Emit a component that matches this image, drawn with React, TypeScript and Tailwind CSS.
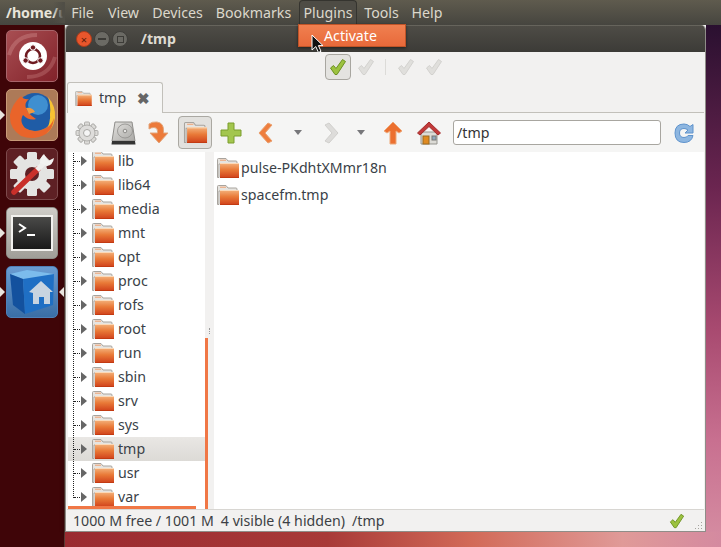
import type { ReactNode } from "react";

const TREE = ["lib", "lib64", "media", "mnt", "opt", "proc", "rofs", "root", "run", "sbin", "srv", "sys", "tmp", "usr", "var"];
const MENUS: [string, string][] = [
  ["File", "w-[35px]"],
  ["View", "w-[47px]"],
  ["Devices", "w-[61px]"],
  ["Bookmarks", "w-[91px]"],
  ["Plugins", "w-[58px]"],
  ["Tools", "w-[49px]"],
  ["Help", "w-[42px]"],
];

function Folder({ w = 22, h = 20 }: { w?: number; h?: number }) {
  return (
    <svg width={w} height={h} viewBox="0 0 22 20" className="shrink-0">
      <defs>
        <linearGradient id="fo" x1="0" y1="0" x2="0" y2="1">
          <stop offset="0" stopColor="#f4b27c" />
          <stop offset="0.45" stopColor="#e97a38" />
          <stop offset="1" stopColor="#d0401a" />
        </linearGradient>
      </defs>
      <path d="M0.5 19.5V1.5Q0.5 0.5 1.5 0.5H9L11 3H19Q20 3 20 4V6H2V19.5Z" fill="#e6e4e0" stroke="#a8a49e" />
      <path d="M3 2.2H9" stroke="#f0a070" />
      <rect x="3" y="5" width="19" height="15" rx="0.5" fill="url(#fo)" />
      <rect x="3" y="5" width="19" height="1" fill="#fbd9b8" />
      <rect x="3" y="19" width="19" height="1" fill="#c23a12" />
    </svg>
  );
}

function Check({ faded = false, size = 18 }: { faded?: boolean; size?: number }) {
  return (
    <svg width={size} height={size} viewBox="0 0 18 18">
      <path
        d="M1.5 10L4.5 7.5L7 10.5L13.5 1.5L16.5 3.5L8 16.5H6Z"
        fill={faded ? "#e0dfdc" : "#9cc23f"}
        stroke={faded ? "#d2d1ce" : "#6c9022"}
        strokeLinejoin="round"
      />
    </svg>
  );
}

function Gear() {
  const teeth = [0, 45, 90, 135, 180, 225, 270, 315];
  return (
    <svg width="24" height="24" viewBox="0 0 24 24">
      {teeth.map((a) => (
        <rect key={a} x="9.5" y="1" width="5" height="5" rx="1" fill="#dcdbd8" stroke="#b0afac" transform={`rotate(${a} 12 12)`} />
      ))}
      <circle cx="12" cy="12" r="8" fill="#dedddb" stroke="#b0afac" />
      <circle cx="12" cy="12" r="3.5" fill="#f5f5f5" stroke="#a9a8a5" />
    </svg>
  );
}

function Drive() {
  return (
    <svg width="25" height="24" viewBox="0 0 25 24">
      <defs>
        <linearGradient id="dr" x1="0" y1="0" x2="1" y2="1">
          <stop offset="0" stopColor="#e4e3e0" />
          <stop offset="1" stopColor="#a9a8a5" />
        </linearGradient>
      </defs>
      <path d="M4 1H21L24 20H1Z" fill="url(#dr)" stroke="#8e8d8a" />
      <ellipse cx="14" cy="10" rx="7.5" ry="7" fill="none" stroke="#8f8e8b" strokeWidth="0.8" />
      <circle cx="14" cy="10" r="1.8" fill="#e6e5e3" stroke="#8e8d8a" />
      <path d="M1 20H24L24.5 23.5H0.5Z" fill="#333" />
    </svg>
  );
}

function Redo() {
  return (
    <svg width="21" height="23" viewBox="0 0 21 23">
      <path
        d="M1 3Q4 0.5 9 1Q16 2 15.5 10V12H20L11 22L2 12H9.5V10Q9.5 6.5 6 6.5Q3 6.5 1 8Z"
        fill="#ec7a3a"
        stroke="#e2a67c"
        strokeLinejoin="round"
      />
    </svg>
  );
}

function Plus() {
  return (
    <svg width="22" height="22" viewBox="0 0 22 22">
      <path d="M8 1H14V8H21V14H14V21H8V14H1V8H8Z" fill="#a3c64e" stroke="#7b9d2c" strokeLinejoin="round" />
    </svg>
  );
}

function Chevron({ dir, faded }: { dir: "left" | "right"; faded?: boolean }) {
  const d = dir === "left" ? "M10 1L14 3L7 11L14 19L10 21L1 11Z" : "M5 1L1 3L8 11L1 19L5 21L14 11Z";
  return (
    <svg width="15" height="22" viewBox="0 0 15 22">
      <path d={d} fill={faded ? "#dddcda" : "#ee7e3e"} stroke={faded ? "#d0cfcc" : "#e8a070"} strokeLinejoin="round" />
    </svg>
  );
}

function Drop() {
  return <div className="w-0 h-0 border-x-[4px] border-x-transparent border-t-[5px] border-t-[#77777a]" />;
}

function Up() {
  return (
    <svg width="20" height="24" viewBox="0 0 20 24">
      <path d="M10 1L19 10L16 12L13 10V23H7V10L4 12L1 10Z" fill="#ec7030" stroke="#eda878" strokeLinejoin="round" />
    </svg>
  );
}

function Home() {
  return (
    <svg width="24" height="24" viewBox="0 0 24 24">
      <path d="M4 11H20V23H4Z" fill="#dcdbd6" stroke="#96958f" />
      <path d="M0.5 12L12 1L23.5 12L21 14L12 5.5L3 14Z" fill="#c23a3a" stroke="#a22c2c" strokeLinejoin="round" />
      <rect x="6" y="15" width="6" height="8" fill="#e08a20" stroke="#9c6a1e" />
      <rect x="15" y="15" width="4" height="4" fill="#8fa7bd" stroke="#787874" />
    </svg>
  );
}

function Refresh() {
  return (
    <svg width="20" height="22" viewBox="0 0 20 22">
      <path
        d="M19 2.5V11H11L14 8Q12 6.5 10 6.5Q5.5 6.5 5.5 11Q5.5 15.5 10 15.5Q13 15.5 14 13.5H19Q17.5 20.5 10 20.5Q1 20.5 1 11Q1 2 10 2Q13.5 2 16 4.5Z"
        fill="#8db6e0"
        stroke="#5f93cc"
        strokeLinejoin="round"
      />
    </svg>
  );
}

function Tile({ className, children, pipL, pipR }: { className: string; children: ReactNode; pipL?: boolean; pipR?: boolean }) {
  return (
    <div className="relative w-[64px] h-[52px] flex justify-center">
      {pipL && <div className="absolute left-0 top-[21px] w-0 h-0 border-y-[5px] border-y-transparent border-l-[5px] border-l-[#e8e4de]" />}
      {pipR && <div className="absolute right-0 top-[21px] w-0 h-0 border-y-[5px] border-y-transparent border-r-[5px] border-r-[#e8e4de]" />}
      <div className={`w-[52px] h-[52px] rounded-[5px] flex items-center justify-center overflow-hidden ${className}`}>{children}</div>
    </div>
  );
}

function Launcher() {
  return (
    <div className="w-[65px] shrink-0 bg-[#3f0508] border-r border-r-[#5a3a34] flex flex-col gap-[7px] pt-[5px]">
      <Tile className="bg-[linear-gradient(135deg,#a84e52,#82222a)] border border-[#a8646a]">
        <svg width="50" height="50" viewBox="0 0 50 50">
          <path d="M2 24Q8 4 30 4" fill="none" stroke="#c07476" strokeWidth="4" opacity="0.6" />
          <path d="M48 26Q42 46 20 46" fill="none" stroke="#b86a6c" strokeWidth="4" opacity="0.5" />
          <circle cx="26" cy="25" r="14" fill="#fff" />
          <circle cx="26" cy="25" r="7" fill="none" stroke="#6e1a20" strokeWidth="2.6" />
          <circle cx="26" cy="16.5" r="2.7" fill="#6e1a20" stroke="#fff" />
          <circle cx="18.6" cy="29.5" r="2.7" fill="#6e1a20" stroke="#fff" />
          <circle cx="33.4" cy="29.5" r="2.7" fill="#6e1a20" stroke="#fff" />
        </svg>
      </Tile>
      <Tile pipL className="bg-[#ad7a58] border border-[#c89a78]">
        <svg width="50" height="50" viewBox="0 0 50 50">
          <circle cx="28" cy="22" r="19" fill="#1f5ca6" />
          <circle cx="31" cy="15" r="10" fill="#3f8fd0" />
          <path d="M41 7Q49 16 48 28Q46 40 38 44Q44 32 43 24Q44 15 41 7Z" fill="#f8c232" />
          <path d="M14 6Q5 14 3 25Q2 38 14 46Q27 51 39 44Q46 39 47 28Q44 37 37 39Q27 44 18 38Q12 31 16 25Q22 31 29 29Q21 24 19 18Q17 13 22 9Q17 10 14 6Z" fill="#e9642a" />
          <path d="M19 18Q25 17 28 22L22 24Z" fill="#f19a3e" />
        </svg>
      </Tile>
      <Tile className="bg-[#5e2024] border border-[#7c4a4c]">
        <svg width="50" height="50" viewBox="0 0 50 50">
          {[0, 45, 90, 135, 180, 225, 270, 315].map((a) => (
            <rect key={a} x="20" y="3" width="10" height="9" rx="1.5" fill="#e4e4e2" transform={`rotate(${a} 25 25)`} />
          ))}
          <circle cx="25" cy="25" r="16" fill="#e4e4e2" />
          <circle cx="25" cy="25" r="7" fill="#5e2024" />
          <path d="M7 43L31 20" stroke="#c9302a" strokeWidth="5.5" strokeLinecap="round" />
          <path d="M30 21L40 11" stroke="#efefed" strokeWidth="5" />
          <path d="M37 5L41 12L47 9Q46 16 40 17L33 14Q33 8 37 5Z" fill="#f2f2f0" />
        </svg>
      </Tile>
      <Tile pipL className="bg-[linear-gradient(#cfcdc8,#a09e98)] border border-[#8e8c86]">
        <div className="w-[42px] h-[36px] border-[2px] border-[#f2f1ee] bg-[linear-gradient(#4a4a48,#1a1a1a)] flex items-start pl-[5px] pt-[6px]">
          <svg width="18" height="14" viewBox="0 0 18 14">
            <path d="M1 1L7 5L1 9" fill="none" stroke="#fff" strokeWidth="2" />
            <path d="M9 12H17" stroke="#fff" strokeWidth="2" />
          </svg>
        </div>
      </Tile>
      <Tile pipL pipR className="bg-[linear-gradient(#6a9cd2,#3a6ea6)] border border-[#4e80b8]">
        <svg width="50" height="50" viewBox="0 0 50 50">
          <path d="M3 7L20 3L47 7L45 12L16 12Z" fill="#7cbcec" />
          <path d="M3 7L16 12L18 47L6 38Z" fill="#13519e" />
          <path d="M16 12L47 7L46 38L18 47Z" fill="#1f6fc4" />
          <path d="M34 14L46 25H43V37H37V30H32V37H26V26L22 25Z" fill="#c8d4e0" />
        </svg>
      </Tile>
    </div>
  );
}

function TopBar() {
  return (
    <div className="relative h-[25px] shrink-0 flex items-center bg-[linear-gradient(#5f5b4e,#46453f)] text-[#dcd8cc]">
      <div className="relative w-[65px] shrink-0 pl-[6px] font-bold text-[#e8e4da] overflow-hidden whitespace-nowrap">
        /home/u
        <div className="absolute right-0 top-0 bottom-0 w-[12px] bg-[linear-gradient(90deg,transparent,#504e46_85%)]" />
      </div>
      <div className="flex h-full items-center">
        {MENUS.map(([m, w]) => (
          <div
            key={m}
            className={`${w} h-full flex items-center justify-center ${m === "Plugins" ? "bg-[#4e4c45] border border-b-0 border-[#35342f] rounded-t-[4px]" : ""}`}
          >
            {m}
          </div>
        ))}
      </div>
      <div className="absolute left-[298px] top-[24px] z-20 w-[108px] h-[23px] pl-[25px] flex items-center bg-[linear-gradient(#f08050,#e8693a)] border border-[#c05428] text-[#fff] shadow-[0_1px_3px_rgba(0,0,0,0.5)]">
        Activate
      </div>
      <svg className="absolute left-[311px] top-[34px] z-30" width="13" height="20" viewBox="0 0 13 20">
        <path d="M1 1V16L4.8 12.6L7.5 18.5L10 17.3L7.4 11.6H12Z" fill="#111" stroke="#fff" strokeLinejoin="round" />
      </svg>
    </div>
  );
}

function TreeRow({ name }: { name: string }) {
  const selected = name === "tmp";
  return (
    <div className={`h-[24px] flex items-center ${selected ? "bg-[linear-gradient(#e9e7e4,#dcdad6)]" : ""}`}>
      <div className="w-[6px] ml-[6px] border-t border-dotted border-[#222]" />
      <div className="w-0 h-0 ml-[1px] border-y-[5px] border-y-transparent border-l-[6px] border-l-[#666]" />
      <div className="ml-[5px]">
        <Folder />
      </div>
      <span className="ml-[4px]">{name}</span>
    </div>
  );
}

function Window() {
  return (
    <div className="w-[641px] h-[507px] flex flex-col bg-[#f2f1f0] border-x border-b border-[#8f8d88] rounded-t-[5px] overflow-hidden shadow-[0_2px_5px_rgba(0,0,0,0.45)]">
      {/* titre */}
      <div className="h-[27px] shrink-0 flex items-center bg-[linear-gradient(#4e4c46,#3c3b37)] border-t border-t-[#66645c]">
        <div className="ml-[10px] w-[16px] h-[16px] rounded-full bg-[#e8562c] border border-[#a83c1c] flex items-center justify-center text-[11px] leading-none text-[#5c1c0a]">×</div>
        <div className="ml-[2px] w-[16px] h-[16px] rounded-full bg-[#6b6a64] border border-[#3f3e3a] flex items-center justify-center">
          <div className="w-[8px] h-[2px] bg-[#3c3b37]" />
        </div>
        <div className="ml-[2px] w-[16px] h-[16px] rounded-full bg-[#6b6a64] border border-[#3f3e3a] flex items-center justify-center">
          <div className="w-[7px] h-[7px] border border-[#3c3b37]" />
        </div>
        <span className="ml-[13px] font-bold text-[#dfdbd2]">/tmp</span>
      </div>

      {/* barre de tâches */}
      <div className="h-[30px] shrink-0 flex items-center pl-[259px]">
        <div className="w-[26px] h-[26px] rounded-[4px] border border-[#a8a6a0] bg-[#e4e3e0] flex items-center justify-center">
          <Check />
        </div>
        <div className="ml-[6px] flex">
          <Check faded />
        </div>
        <div className="ml-[10px] w-px h-[16px] bg-[#dcdbd8]" />
        <div className="ml-[11px] flex">
          <Check faded />
        </div>
        <div className="ml-[10px] flex">
          <Check faded />
        </div>
      </div>

      {/* onglet */}
      <div className="h-[31px] shrink-0 flex items-end pl-[1px] relative z-10 mb-[-1px]">
        <div className="w-[96px] h-[31px] bg-[#f6f6f5] border border-b-0 border-[#c2c0ba] rounded-t-[3px] flex items-center pl-[7px]">
          <Folder w={17} h={15} />
          <span className="ml-[7px] text-[#3a3f48]">tmp</span>
          <span className="ml-[11px] font-bold text-[#666] text-[15px] leading-none">✖</span>
        </div>
      </div>

      <div className="flex-1 min-h-0 flex flex-col ml-[1px] mr-px border-t border-t-[#c2c0ba] bg-[#f5f5f4]">
        {/* barre d'outils */}
        <div className="h-[39px] shrink-0 flex items-center pl-[2px]">
          <Slot w="w-[36px]"><Gear /></Slot>
          <Slot w="w-[36px]"><Drive /></Slot>
          <Slot w="w-[34px]"><Redo /></Slot>
          <Slot w="w-[40px]">
            <div className="w-[34px] h-[33px] rounded-[4px] border border-[#aaa8a2] bg-[#e2e1de] flex items-center justify-center">
              <Folder w={25} h={21} />
            </div>
          </Slot>
          <Slot w="w-[32px]"><Plus /></Slot>
          <Slot w="w-[36px]"><Chevron dir="left" /></Slot>
          <Slot w="w-[30px]"><Drop /></Slot>
          <Slot w="w-[36px]"><Chevron dir="right" faded /></Slot>
          <Slot w="w-[24px]"><Drop /></Slot>
          <Slot w="w-[40px]"><Up /></Slot>
          <Slot w="w-[32px]"><Home /></Slot>
          <div className="ml-[8px] w-[208px] h-[25px] bg-white border border-[#a8a6a0] rounded-[3px] flex items-center pl-[3px] text-[#333]">/tmp</div>
          <div className="ml-[13px]">
            <Refresh />
          </div>
        </div>

        {/* volets */}
        <div className="flex-1 min-h-0 flex bg-[#f2f1f0] pl-[1px]">
          <div className="relative w-[137px] shrink-0 bg-white overflow-hidden text-[#3a3f48]">
            <div className="mt-[-4px] pt-[1px] relative">
              {TREE.map((t) => (
                <TreeRow key={t} name={t} />
              ))}
              <div className="absolute left-[5px] top-[0px] h-[350px] border-l border-dotted border-[#222]" />
            </div>
            <div className="absolute left-0 bottom-0 w-[128px] h-[3px] bg-[#f07746]" />
          </div>
          <div className="relative w-[9px] shrink-0">
            <div className="absolute left-0 top-[186px] bottom-0 w-[3px] bg-[#f07746]" />
            <div className="absolute left-[4px] top-[176px] w-[2px] h-[6px] border-l border-dotted border-[#999]" />
          </div>
          <div className="flex-1 bg-white text-[#3a3f48] pt-[2px] pl-[3px]">
            <div className="h-[27px] flex items-center">
              <Folder />
              <span className="ml-[2px]">pulse-PKdhtXMmr18n</span>
            </div>
            <div className="h-[27px] flex items-center">
              <Folder />
              <span className="ml-[2px]">spacefm.tmp</span>
            </div>
          </div>
        </div>

        {/* état */}
        <div className="relative h-[22px] shrink-0 flex items-center border-t border-t-[#d8d6d2] bg-[#f2f1f0] text-[#3c3f44] pl-[6px]">
          <span>1000 M free / 1001 M</span>
          <span className="ml-[7px]">4 visible (4 hidden)</span>
          <span className="ml-[7px]">/tmp</span>
          <div className="ml-auto mr-[19px] flex">
            <Check size={16} />
          </div>
          <div className="absolute right-[2px] bottom-[2px] grid grid-cols-3 gap-[2px]">
            {[0, 0, 1, 0, 1, 1, 1, 1, 1].map((on, i) => (
              <div key={i} className={`w-px h-px ${on ? "bg-[#a5a39e]" : ""}`} />
            ))}
          </div>
        </div>
      </div>
    </div>
  );
}

function Slot({ w, children }: { w: string; children: ReactNode }) {
  return <div className={`${w} shrink-0 flex items-center justify-center`}>{children}</div>;
}

export default function App() {
  return (
    <div className="w-[721px] h-[547px] flex flex-col overflow-hidden text-[14.2px] font-['Noto_Sans',sans-serif]">
      <TopBar />
      <div className="flex-1 min-h-0 flex">
        <Launcher />
        <div className="flex-1 flex flex-col min-w-0">
          <div className="flex-1 min-h-0 flex">
            <Window />
            <div className="flex-1 bg-[linear-gradient(#2a1030,#6b2550_32%,#a84a70_60%,#c87090_82%,#d48aa0)]" />
          </div>
          <div className="h-[15px] shrink-0 bg-[linear-gradient(90deg,#9a2a30,#a83a38_40%,#d26a58_62%,#e09a98_85%,#d48aa0)]" />
        </div>
      </div>
    </div>
  );
}
